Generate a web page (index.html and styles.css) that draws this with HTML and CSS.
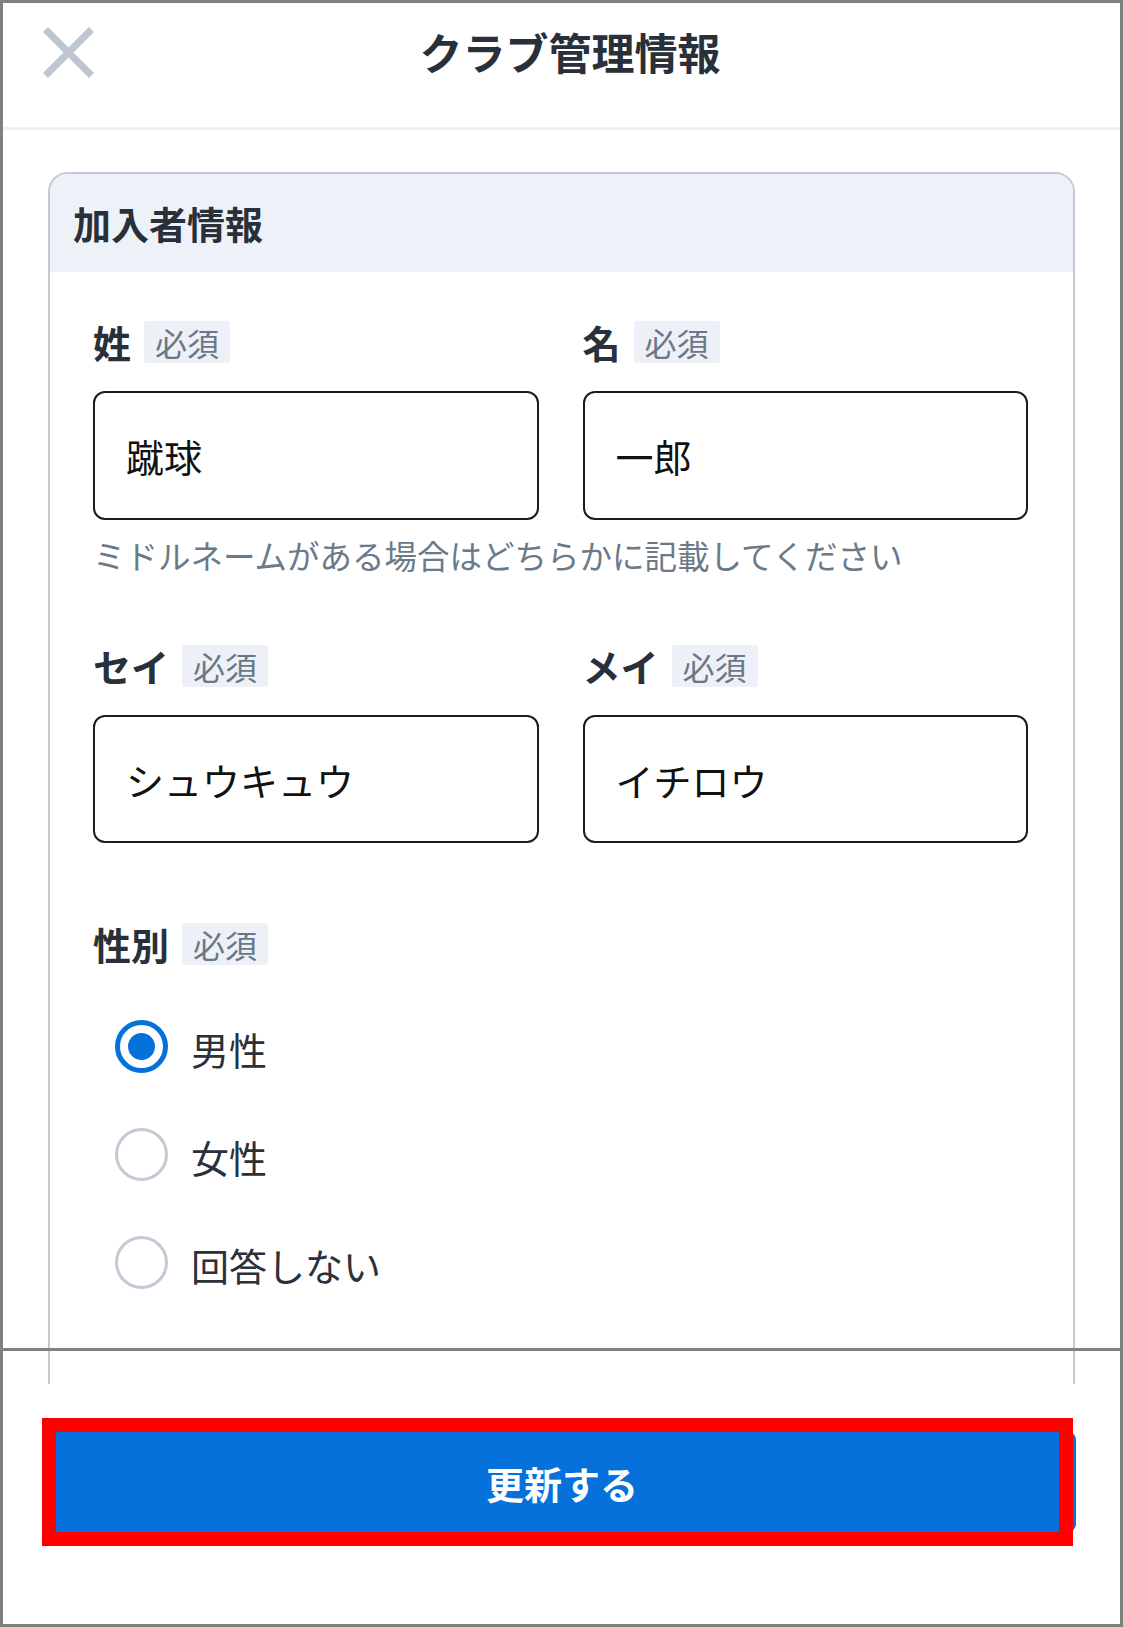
FILE: index.html
```html
<!DOCTYPE html>
<html lang="ja">
<head>
<meta charset="utf-8">
<title>クラブ管理情報</title>
<link rel="stylesheet" href="styles.css">
</head>
<body>
<div class="frame">
  <header class="topbar">
    <div class="close">
      <svg class="close-icon" viewBox="0 0 51 51" width="51" height="51" aria-hidden="true">
        <line x1="2.5" y1="2.5" x2="48.5" y2="48.5" />
        <line x1="48.5" y1="2.5" x2="2.5" y2="48.5" />
      </svg>
    </div>
    <h1 class="title">クラブ管理情報</h1>
    <div class="spacer"></div>
  </header>

  <main class="content">
    <section class="card">
      <div class="card-head">加入者情報</div>
      <div class="card-body">
        <div class="pair">
          <div class="field">
            <div class="label-row"><span class="label">姓</span><span class="badge">必須</span></div>
            <div class="input">蹴球</div>
          </div>
          <div class="field">
            <div class="label-row"><span class="label">名</span><span class="badge">必須</span></div>
            <div class="input">一郎</div>
          </div>
        </div>
        <p class="help">ミドルネームがある場合はどちらかに記載してください</p>

        <div class="pair pair-kana">
          <div class="field">
            <div class="label-row"><span class="label">セイ</span><span class="badge">必須</span></div>
            <div class="input input-kana">シュウキュウ</div>
          </div>
          <div class="field">
            <div class="label-row"><span class="label">メイ</span><span class="badge">必須</span></div>
            <div class="input input-kana">イチロウ</div>
          </div>
        </div>

        <div class="gender">
          <div class="label-row"><span class="label">性別</span><span class="badge">必須</span></div>
          <ul class="radios">
            <li class="radio-row"><span class="radio checked"></span><span class="radio-text">男性</span></li>
            <li class="radio-row"><span class="radio"></span><span class="radio-text">女性</span></li>
            <li class="radio-row"><span class="radio"></span><span class="radio-text">回答しない</span></li>
          </ul>
        </div>
      </div>
    </section>
  </main>

  <footer class="footer">
    <button class="submit" type="button">更新する</button>
  </footer>

  <div class="stitch"></div>
  <div class="highlight"></div>
</div>
</body>
</html>
```

FILE: styles.css
```css
* { box-sizing: border-box; }

html, body {
  margin: 0;
  padding: 0;
  background: #ffffff;
}

body {
  font-family: "Noto Sans CJK JP", "Noto Sans", "Liberation Sans", sans-serif;
  color: #2a313a;
}

.frame {
  position: relative;
  width: 1123px;
  height: 1627px;
  border: 3px solid #808080;
  overflow: hidden;
  background: #ffffff;
  display: flex;
  flex-direction: column;
}

/* ---------- top bar ---------- */
.topbar {
  flex: none;
  height: 127px;
  border-bottom: 3px solid #eef2f6;
  display: grid;
  grid-template-columns: 1fr auto 1fr;
  align-items: start;
  padding-left: 17px;
}

.close {
  padding-top: 24px;
  margin-left: 23px;
}

.close-icon {
  display: block;
  stroke: #bdc6d0;
  stroke-width: 7;
  stroke-linecap: butt;
}

.title {
  margin: 0;
  padding-top: 18px;
  font-size: 43px;
  line-height: 60px;
  font-weight: 700;
  color: #29303a;
  white-space: nowrap;
}

/* ---------- content ---------- */
.content {
  flex: none;
  height: 1254px;
  overflow: hidden;
  padding: 42px 45px 0 45px;
}

.card {
  border: 2px solid #c2cad5;
  border-radius: 20px 20px 0 0;
  height: 1400px;
  overflow: hidden;
}

.card-head {
  height: 98px;
  background: #edf2f8;
  padding-left: 23px;
  font-size: 38px;
  line-height: 98px;
  font-weight: 700;
  color: #29303a;
}

.card-body {
  padding: 49px 45px 0 43px;
}

.pair {
  display: grid;
  grid-template-columns: 1fr 1fr;
  column-gap: 44px;
}

.label-row {
  display: flex;
  align-items: center;
  gap: 13px;
  height: 42px;
}

.label {
  font-size: 38px;
  line-height: 42px;
  font-weight: 700;
  color: #29303a;
}

.badge {
  background: #edf1f7;
  color: #6b7785;
  font-size: 32px;
  line-height: 42px;
  padding: 0 11px;
  border-radius: 3px;
}

.input {
  margin-top: 28px;
  height: 129px;
  border: 2px solid #1c1c1c;
  border-radius: 12px;
  padding: 0 31px;
  display: flex;
  align-items: center;
  font-size: 38px;
  color: #111111;
}

.input-kana {
  height: 128px;
}

.help {
  margin: 11px 0 0 0;
  font-size: 32.5px;
  line-height: 48px;
  color: #6b7a89;
  white-space: nowrap;
}

.pair-kana {
  margin-top: 66px;
}

.gender {
  margin-top: 80px;
}

.radios {
  list-style: none;
  margin: 27px 0 0 0;
  padding: 0 0 0 22px;
}

.radio-row {
  height: 108px;
  display: flex;
  align-items: center;
  gap: 23px;
}

.radio {
  flex: none;
  width: 53px;
  height: 53px;
  border-radius: 50%;
  border: 3px solid #c2cad4;
  background: #ffffff;
  position: relative;
}

.radio.checked {
  border: 5px solid #0670db;
}

.radio.checked::after {
  content: "";
  position: absolute;
  left: 8px;
  top: 8px;
  width: 27px;
  height: 27px;
  border-radius: 50%;
  background: #0670db;
}

.radio-text {
  font-size: 38px;
  line-height: 50px;
  color: #2a313a;
  padding-top: 6px;
}

/* ---------- footer ---------- */
.footer {
  flex: 1;
  background: #ffffff;
  padding: 48px 44px 0 45px;
}

.submit {
  display: block;
  width: 100%;
  height: 100px;
  border: none;
  border-radius: 8px;
  background: #0670db;
  color: #ffffff;
  font-family: "Noto Sans CJK JP", "Noto Sans", "Liberation Sans", sans-serif;
  font-size: 38px;
  font-weight: 700;
  padding: 0;
  padding-top: 1px;
}

/* ---------- overlays ---------- */
.stitch {
  position: absolute;
  left: 0;
  right: 0;
  top: 1345px;
  height: 3px;
  background: #808080;
}

.highlight {
  position: absolute;
  left: 39px;
  top: 1415px;
  width: 1031px;
  height: 128px;
  border: 14px solid #ff0000;
}
```
